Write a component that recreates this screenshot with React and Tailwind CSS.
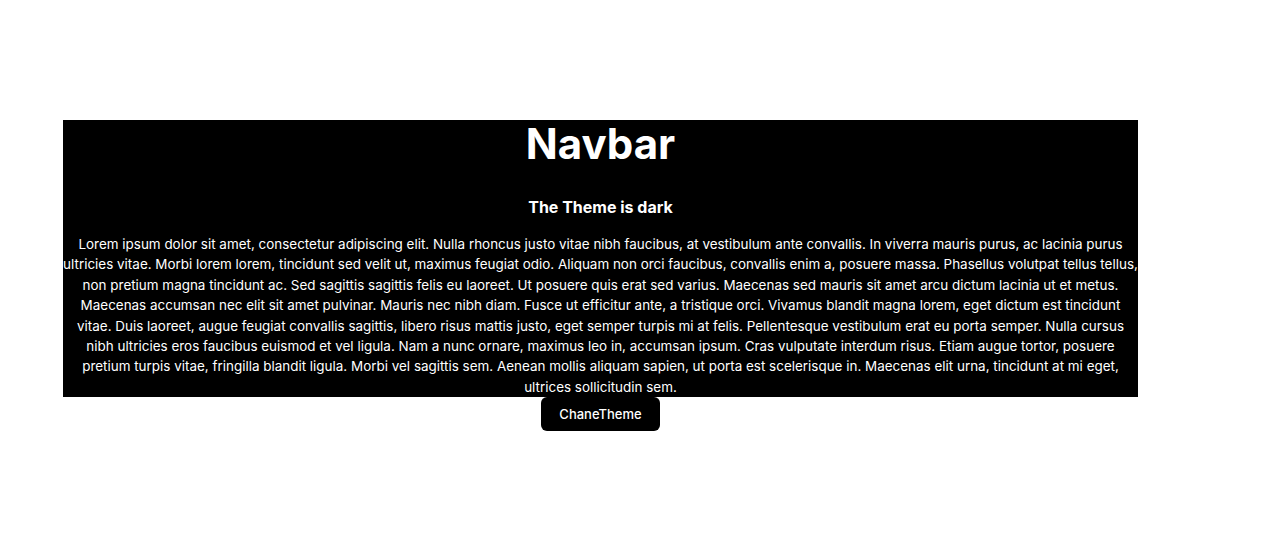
const TEXTO =
  'Lorem ipsum dolor sit amet, consectetur adipiscing elit. Nulla rhoncus justo vitae nibh faucibus, at vestibulum ante convallis. In viverra mauris purus, ac lacinia purus ultricies vitae. Morbi lorem lorem, tincidunt sed velit ut, maximus feugiat odio. Aliquam non orci faucibus, convallis enim a, posuere massa. Phasellus volutpat tellus tellus, non pretium magna tincidunt ac. Sed sagittis sagittis felis eu laoreet. Ut posuere quis erat sed varius. Maecenas sed mauris sit amet arcu dictum lacinia ut et metus. Maecenas accumsan nec elit sit amet pulvinar. Mauris nec nibh diam. Fusce ut efficitur ante, a tristique orci. Vivamus blandit magna lorem, eget dictum est tincidunt vitae. Duis laoreet, augue feugiat convallis sagittis, libero risus mattis justo, eget semper turpis mi at felis. Pellentesque vestibulum erat eu porta semper. Nulla cursus nibh ultricies eros faucibus euismod et vel ligula. Nam a nunc ornare, maximus leo in, accumsan ipsum. Cras vulputate interdum risus. Etiam augue tortor, posuere pretium turpis vitae, fringilla blandit ligula. Morbi vel sagittis sem. Aenean mollis aliquam sapien, ut porta est scelerisque in. Maecenas elit urna, tincidunt at mi eget, ultrices sollicitudin sem.';

export default function App() {
  return (
    <div className="min-h-[536px] bg-white font-['Inter',sans-serif]">
      <div className="ml-[63px] w-[1075px] pt-[120px]">
        <div className="bg-black text-center text-white">
          <h1 className="text-[42px] font-bold leading-[48px]">Navbar</h1>
          <h3 className="mt-[29px] text-base font-bold leading-[20px]">The Theme is dark</h3>
          <p className="mt-[17px] text-[13.45px] leading-[20.4px]">{TEXTO}</p>
        </div>
        <div className="flex justify-center">
          <button
            type="button"
            className="h-[34px] w-[119px] rounded-md bg-black text-[13px] font-medium text-white"
          >
            ChaneTheme
          </button>
        </div>
      </div>
    </div>
  );
}
